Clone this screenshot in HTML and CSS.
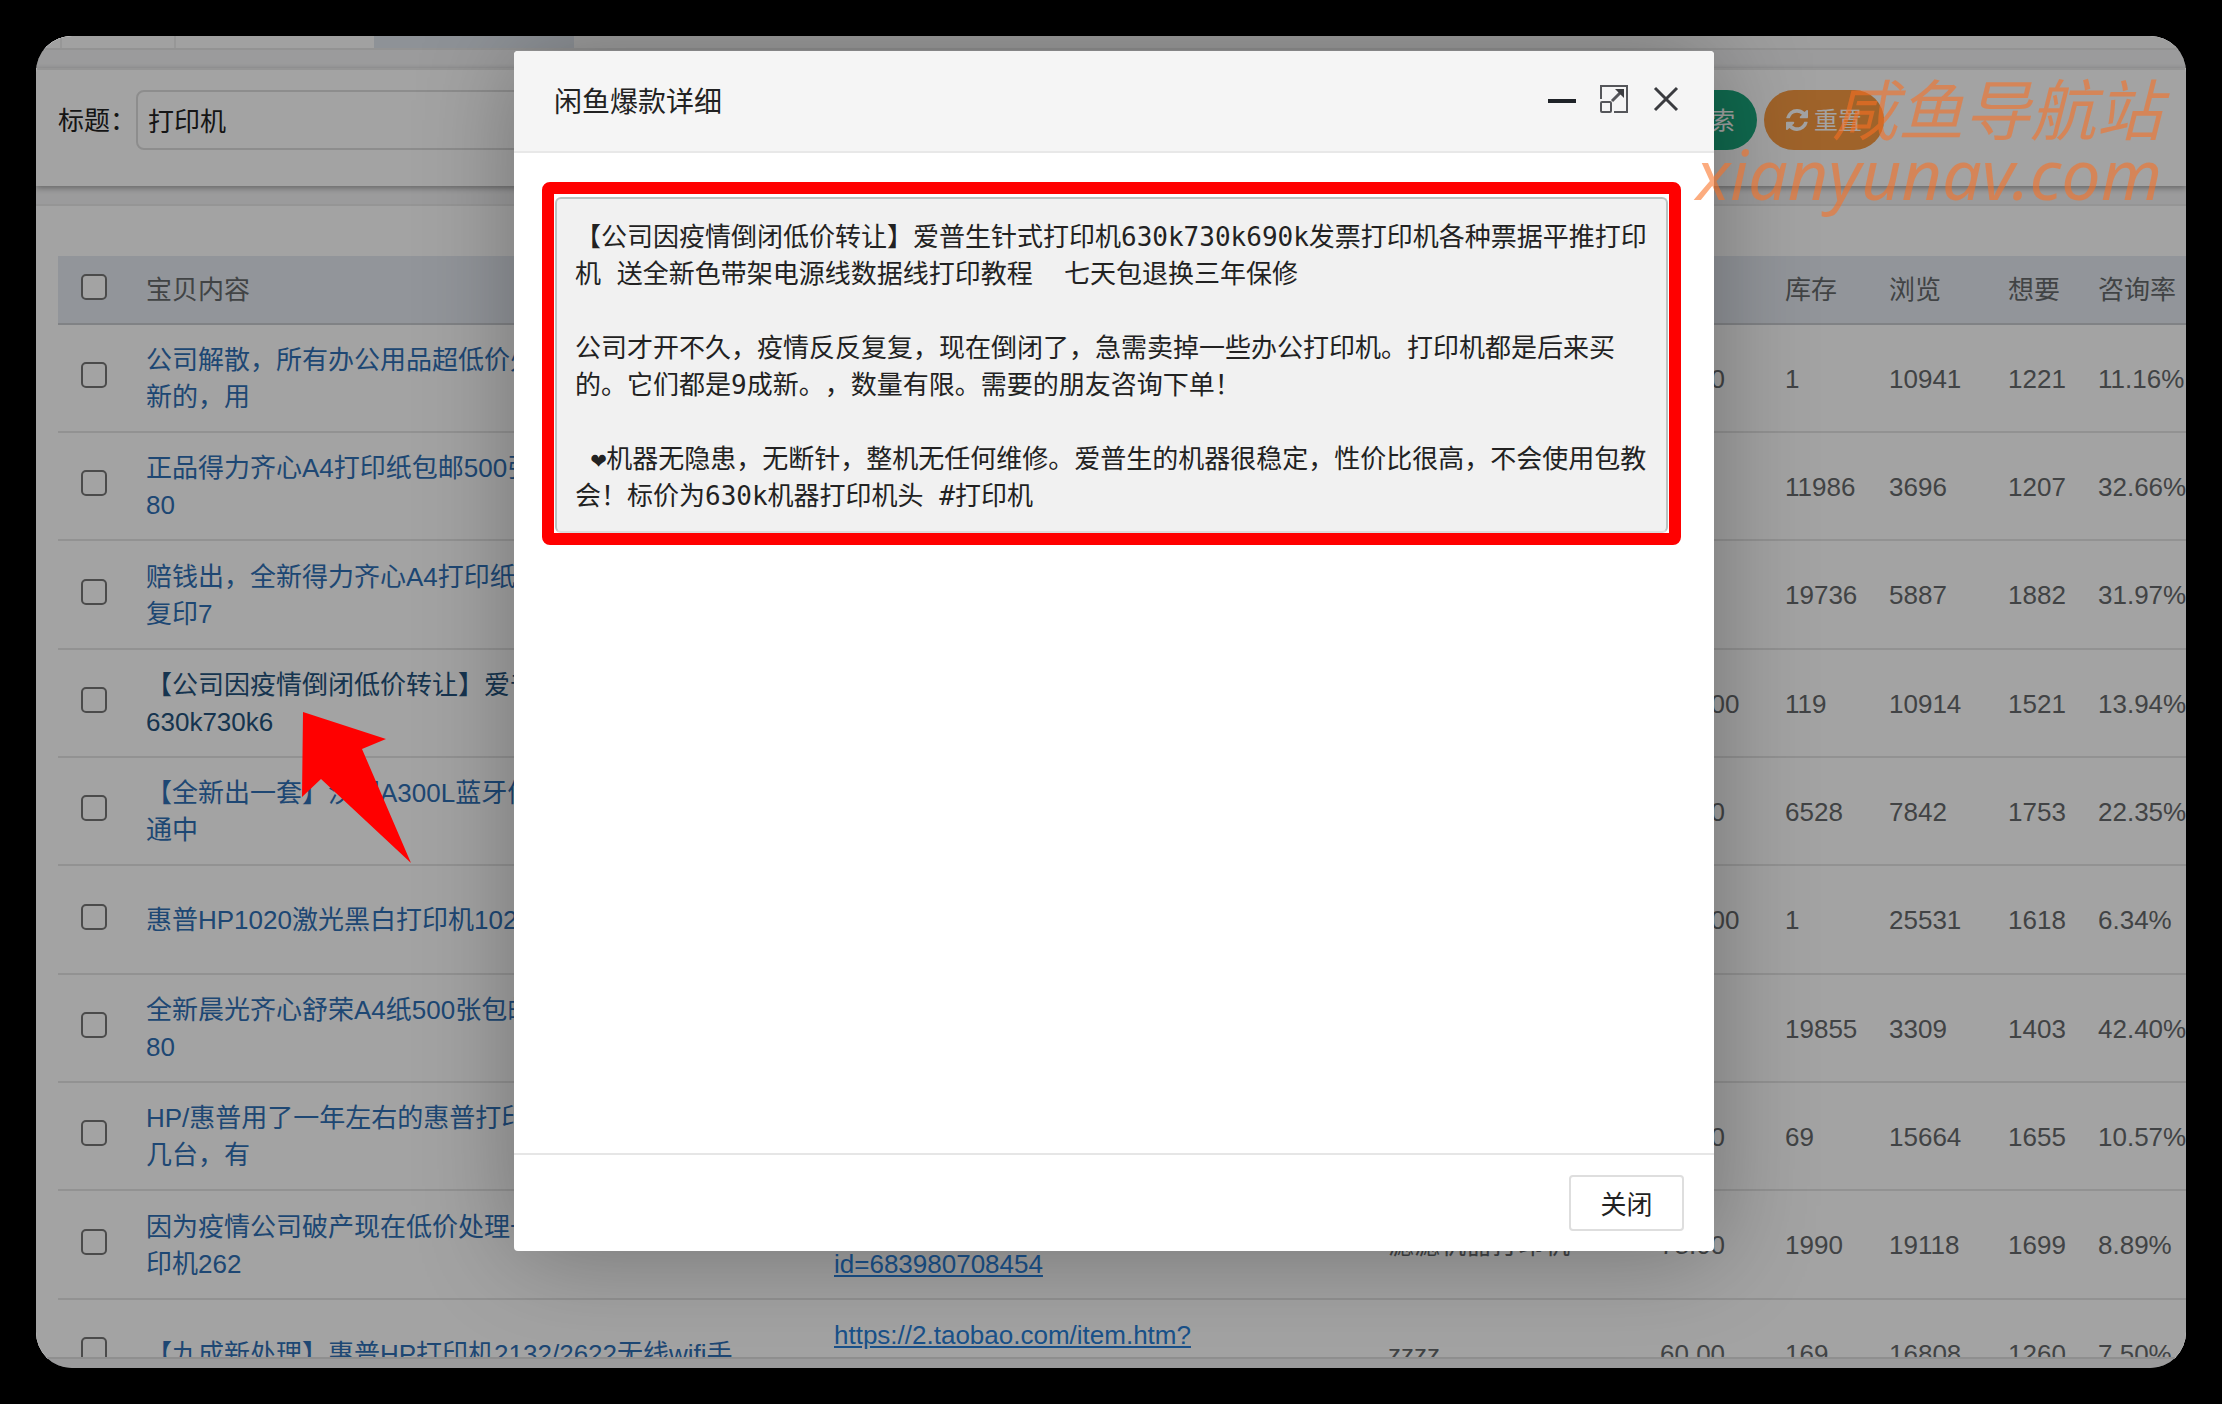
FILE: index.html
```html
<!DOCTYPE html>
<html lang="zh-CN">
<head>
    <meta charset="UTF-8">
    <meta name="viewport" content="width=device-width, initial-scale=1.0">
    <title>闲鱼爆款</title>
    <link rel="stylesheet" href="styles.css">
</head>
<body>
    <div class="frame">
        <div class="tabs">
            <span class="tab tab-icon"></span>
            <span class="tab tab-home"></span>
            <span class="tab tab-page"></span>
            <span class="tab tab-active"></span>
        </div>

        <form class="search">
            <label for="title">标题：</label>
            <input type="text" id="title" value="打印机">
            <button type="button" class="btn btn-search">
                <svg viewBox="0 0 22 22" width="22" height="22"><circle cx="9" cy="9" r="6" fill="none" stroke="currentColor" stroke-width="3"/><path d="M13 13l7 7" stroke="currentColor" stroke-width="3"/></svg>
                搜索
            </button>
            <button type="reset" class="btn btn-reset">
                <svg viewBox="0 0 1536 1536" width="22" height="22"><path fill="currentColor" d="M1511 928q0 5-1 7-64 268-268 434.500T764 1536q-146 0-282.500-55T238 1324l-129 129q-19 19-45 19t-45-19-19-45V960q0-26 19-45t45-19h448q26 0 45 19t19 45-19 45l-137 137q71 66 161 102t187 36q134 0 250-65t186-179q11-17 53-117 8-23 30-23h192q13 0 22.500 9.500T1511 928zM1536 128v448q0 26-19 45t-45 19h-448q-26 0-45-19t-19-45 19-45l138-138Q969 256 768 256q-134 0-250 65T332 500q-11 17-53 117-8 23-30 23H50q-13 0-22.500-9.500T18 608v-7q65-268 270-434.500T768 0q146 0 284 55.500T1297 212l130-129q19-19 45-19t45 19 19 45z"/></svg>
                重置
            </button>
        </form>

        <div class="list">
            <table>
                <thead>
                    <tr>
                        <th class="c-check"><input type="checkbox" aria-label="全选"></th>
                        <th class="c-title">宝贝内容</th>
                        <th class="c-link"></th>
                        <th class="c-seller"></th>
                        <th class="c-price"></th>
                        <th class="c-stock">库存</th>
                        <th class="c-view">浏览</th>
                        <th class="c-want">想要</th>
                        <th>咨询率</th>
                    </tr>
                </thead>
                <tbody>
                    <tr>
                        <td><input type="checkbox" aria-label="选择"></td>
                        <td><a href="#">公司解散，所有办公用品超低价处<br>新的，用</a></td>
                        <td></td><td></td><td>80.00</td>
                        <td>1</td><td>10941</td><td>1221</td><td>11.16%</td>
                    </tr>
                    <tr>
                        <td><input type="checkbox" aria-label="选择"></td>
                        <td><a href="#">正品得力齐心A4打印纸包邮500张<br>80</a></td>
                        <td></td><td></td><td></td>
                        <td>11986</td><td>3696</td><td>1207</td><td>32.66%</td>
                    </tr>
                    <tr>
                        <td><input type="checkbox" aria-label="选择"></td>
                        <td><a href="#">赔钱出，全新得力齐心A4打印纸<br>复印7</a></td>
                        <td></td><td></td><td></td>
                        <td>19736</td><td>5887</td><td>1882</td><td>31.97%</td>
                    </tr>
                    <tr>
                        <td><input type="checkbox" aria-label="选择"></td>
                        <td><a href="#" class="current">【公司因疫情倒闭低价转让】爱普<br>630k730k6</a></td>
                        <td></td><td></td><td>500.00</td>
                        <td>119</td><td>10914</td><td>1521</td><td>13.94%</td>
                    </tr>
                    <tr>
                        <td><input type="checkbox" aria-label="选择"></td>
                        <td><a href="#">【全新出一套】汉印A300L蓝牙便<br>通中</a></td>
                        <td></td><td></td><td>80.00</td>
                        <td>6528</td><td>7842</td><td>1753</td><td>22.35%</td>
                    </tr>
                    <tr>
                        <td><input type="checkbox" aria-label="选择"></td>
                        <td><a href="#">惠普HP1020激光黑白打印机1020</a></td>
                        <td></td><td></td><td>300.00</td>
                        <td>1</td><td>25531</td><td>1618</td><td>6.34%</td>
                    </tr>
                    <tr>
                        <td><input type="checkbox" aria-label="选择"></td>
                        <td><a href="#">全新晨光齐心舒荣A4纸500张包邮<br>80</a></td>
                        <td></td><td></td><td></td>
                        <td>19855</td><td>3309</td><td>1403</td><td>42.40%</td>
                    </tr>
                    <tr>
                        <td><input type="checkbox" aria-label="选择"></td>
                        <td><a href="#">HP/惠普用了一年左右的惠普打印<br>几台，有</a></td>
                        <td></td><td></td><td>80.00</td>
                        <td>69</td><td>15664</td><td>1655</td><td>10.57%</td>
                    </tr>
                    <tr>
                        <td><input type="checkbox" aria-label="选择"></td>
                        <td><a href="#">因为疫情公司破产现在低价处理一<br>印机262</a></td>
                        <td><a href="#" class="url">https://2.taobao.com/item.htm?<br>id=683980708454</a></td>
                        <td>滤滤机器打印机</td><td>78.00</td>
                        <td>1990</td><td>19118</td><td>1699</td><td>8.89%</td>
                    </tr>
                    <tr>
                        <td><input type="checkbox" aria-label="选择"></td>
                        <td><a href="#">【九成新处理】惠普HP打印机2132/2622无线wifi手</a></td>
                        <td><a href="#" class="url">https://2.taobao.com/item.htm?</a><br>&nbsp;</td>
                        <td>zzzz</td><td>60.00</td>
                        <td>169</td><td>16808</td><td>1260</td><td>7.50%</td>
                    </tr>
                </tbody>
            </table>
        </div>

        <div class="shade">
            <div class="dialog" role="dialog" aria-labelledby="dialog-title">
                <div class="dialog-head">
                    <span id="dialog-title">闲鱼爆款详细</span>
                    <div class="dialog-tools">
                        <button type="button" aria-label="最小化">
                            <svg viewBox="0 0 28 28" width="28" height="28"><path d="M0 16h28" stroke="#1f2328" stroke-width="4"/></svg>
                        </button>
                        <button type="button" aria-label="最大化">
                            <svg viewBox="0 0 28 28" width="28" height="28" fill="none" stroke="#55565a" stroke-width="2">
                                <path d="M1 14V1h26v26H14"/>
                                <rect x="1" y="17" width="10" height="10" rx="1"/>
                                <path d="M12 16L22 6" stroke-width="3"/>
                                <path d="M15 4h9v9z" fill="#3c3d41" stroke="none"/>
                            </svg>
                        </button>
                        <button type="button" aria-label="关闭">
                            <svg viewBox="0 0 28 28" width="28" height="28"><path d="M3 3l22 22M25 3L3 25" stroke="#3a3b3f" stroke-width="3"/></svg>
                        </button>
                    </div>
                </div>
                <div class="dialog-body">
                    <div class="mark">
                        <textarea rows="8" readonly aria-label="宝贝内容">【公司因疫情倒闭低价转让】爱普生针式打印机630k730k690k发票打印机各种票据平推打印机 送全新色带架电源线数据线打印教程  七天包退换三年保修

公司才开不久，疫情反反复复，现在倒闭了，急需卖掉一些办公打印机。打印机都是后来买的。它们都是9成新。，数量有限。需要的朋友咨询下单！

 ❤机器无隐患，无断针，整机无任何维修。爱普生的机器很稳定，性价比很高，不会使用包教会！标价为630k机器打印机头 #打印机</textarea>
                    </div>
                </div>
                <div class="dialog-foot">
                    <button type="button">关闭</button>
                </div>
            </div>
        </div>

        <svg class="arrow" viewBox="0 0 110 153" width="110" height="153"><path fill="#f00" d="M1 1L84 28 60 38 109 152 19 68 0 86z"/></svg>

        <div class="watermark">
            <div>咸鱼导航站</div>
            <div class="domain">xianyunav.com</div>
        </div>
    </div>
</body>
</html>
```

FILE: styles.css
```css
* { box-sizing: border-box; }
body { margin: 0; padding: 36px; background: #000; color: #676a6c; font: 26px/37px "Liberation Sans", "Noto Sans CJK SC", sans-serif; }
input, button, textarea { font: inherit; color: inherit; }
a { color: #2f6fb5; text-decoration: none; }

.frame { position: relative; display: flex; flex-direction: column; height: calc(100vh - 72px); border-radius: 36px; overflow: hidden; background: #f3f3f4; }

/* page tabs */
.tabs { display: flex; height: 14px; background: #f8f8f8; border-bottom: 2px solid #e7e7e7; }
.tab { background: #fcfcfc; border-right: 2px solid #ececec; }
.tab-icon { width: 26px; }
.tab-home { width: 114px; }
.tab-page { width: 198px; border: 0; }
.tab-active { width: 200px; background: #dfe5ec; border: 0; }

/* search form */
.search { display: flex; align-items: center; gap: 7px; margin-top: 18px; padding: 20px 302px 36px 22px; background: #fff; border-top: 2px solid #eaeaea; box-shadow: 0 2px 6px rgba(0, 0, 0, .35); color: #222; }
.search label { width: 71px; padding-top: 2px; white-space: nowrap; }
.search input { flex: 1; height: 60px; padding: 0 10px 2px; border: 2px solid #ddd; border-radius: 8px; background: #fff; }
.btn { display: flex; align-items: center; justify-content: center; gap: 6px; width: 120px; height: 60px; padding: 0; border: 0; border-radius: 30px; color: #fff; font-size: 24px; white-space: nowrap; }
.btn-search { background: #1aa77c; }
.btn-reset { background: #f99b42; }

/* result list */
.list { flex: 1; min-height: 0; margin: 18px 0 9px; padding: 50px 0 0 22px; overflow: hidden; background: #fff; border-top: 2px solid #eaeaea; border-bottom: 2px solid #e0e0e0; }
table { width: 100%; table-layout: fixed; border-collapse: separate; border-spacing: 0; }
th, td { padding: 2px 16px 0; text-align: left; white-space: nowrap; }
th { height: 69px; font-weight: normal; background: #e4eaf1; border-bottom: 2px solid #c8ccd0; }
td { height: 108px; border-bottom: 2px solid #e4e4e4; }
tr:nth-child(3n) td { height: 109px; }
th:first-child, td:first-child { padding: 0 0 0 23px; }
.c-check { width: 72px; }
.c-title { width: 688px; }
.c-seller { width: 272px; }
.c-price { width: 125px; }
.c-stock { width: 104px; }
.c-view { width: 119px; }
.c-want { width: 90px; }
.c-link { width: 554px; }
.current { color: #23527c; }
.url { color: #2a7fd8; text-decoration: underline; }
input[type="checkbox"] { appearance: none; display: block; width: 26px; height: 26px; margin: 0 0 6px; border: 2px solid #767676; border-radius: 5px; background: #fff; }

/* detail dialog */
.shade { position: absolute; inset: 0; display: flex; justify-content: center; align-items: flex-start; padding: 15px 0 117px 6px; background: rgba(0, 0, 0, .36); }
.dialog { display: flex; flex-direction: column; width: 1200px; height: 100%; background: #fff; border-radius: 4px; box-shadow: 2px 2px 100px rgba(0, 0, 0, .3); color: #222; }
.dialog-head { display: flex; justify-content: space-between; align-items: center; height: 102px; padding: 2px 34px 0 40px; background: #f5f5f5; border-bottom: 2px solid #e8e8e8; border-radius: 4px 4px 0 0; font-size: 28px; }
.dialog-tools { display: flex; gap: 24px; padding-bottom: 6px; }
.dialog-tools button { display: block; padding: 0; border: 0; background: none; line-height: 0; }
.dialog-body { flex: 1; padding: 29px 33px 0 28px; }
.mark { padding: 3px 1px 0; border: 12px solid #f00; border-radius: 8px; }
textarea { display: block; width: 100%; padding: 20px 18px 16px; border: 2px solid #b9c3c2; border-bottom-color: #ddd; border-radius: 6px; background: #f1f1f1; resize: none; outline: 0; overflow: hidden; font-family: "DejaVu Sans Mono", "Noto Sans CJK SC", monospace; text-spacing-trim: space-all; }
.dialog-foot { display: flex; justify-content: flex-end; padding: 20px 30px; border-top: 2px solid #e6e6e6; }
.dialog-foot button { width: 115px; height: 56px; padding: 4px 0 0; border: 2px solid #dedede; border-radius: 4px; background: #fff; }

/* overlays */
.arrow { position: absolute; left: 266px; top: 675px; }
.watermark { position: absolute; right: 24px; top: 40px; color: rgba(250, 112, 35, .58); font: italic 66px/66px "Noto Sans", "Noto Sans CJK SC", sans-serif; text-align: right; }
.domain { font-size: 70px; line-height: 62px; }
```
